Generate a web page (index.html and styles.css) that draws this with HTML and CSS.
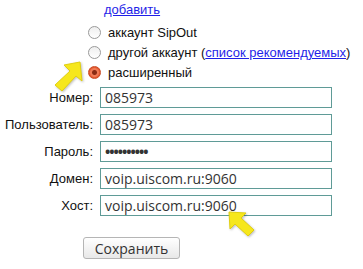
FILE: index.html
```html
<!doctype html>
<html>
  <head>
    <title>SIP account</title>
    <link rel="stylesheet" href="styles.css">
  </head>
  <body>
    <div class="sip">
      <div class="add"><a href="#">добавить</a></div>

      <ul class="choices">
        <li><span class="radio"></span><span>аккаунт SipOut</span></li>
        <li><span class="radio"></span><span>другой аккаунт (<a href="#">список рекомендуемых</a>)</span></li>
        <li><span class="radio checked"></span><span>расширенный</span></li>
      </ul>

      <div class="fields">
        <label>Номер:</label><div class="field">085973</div>
        <label>Пользователь:</label><div class="field">085973</div>
        <label>Пароль:</label><div class="field dots">••••••••••</div>
        <label>Домен:</label><div class="field">voip.uiscom.ru:9060</div>
        <label>Хост:</label><div class="field">voip.uiscom.ru:9060</div>
      </div>

      <div class="actions"><button>Сохранить</button></div>

      <!-- Yellow hint arrows. -->
      <svg class="arrow arrow-radio" width="34" height="36" viewBox="0 0 34 36">
        <polygon points="27,2 29,21 23,16 9,31 2,25 17,11 11,5" fill="#f6e71c" stroke="#e0cf10" stroke-width="1"/>
      </svg>
      <svg class="arrow arrow-host" width="30" height="30" viewBox="0 0 30 30">
        <polygon points="2,2 19,3 14,8 27,20 21,26 8,14 3,19" fill="#f6e71c" stroke="#e0cf10" stroke-width="1"/>
      </svg>
    </div>
  </body>
</html>
```

FILE: styles.css
```css
* { margin: 0; padding: 0; box-sizing: border-box; }
html, body {
  width: 100%;
  height: 100%;
  background: #fff;
  font-family: "Liberation Sans", Arial, sans-serif;
  font-size: 13px;
  color: #111;
}
a { color: #1f1fe8; }
.sip {
  position: relative;
  height: 100%;
}
.add {
  height: 22px;
  padding: 2px 0 0 104px;
}
.choices {
  list-style: none;
  padding-left: 88px;
}
.choices li {
  display: flex;
  align-items: center;
  height: 20px;
  gap: 7px;
  white-space: nowrap;
}
.radio {
  flex: none;
  width: 13px;
  height: 13px;
  border-radius: 50%;
  border: 1px solid #9a9a9a;
  background: linear-gradient(#eee, #fff);
}
.radio.checked {
  border-color: #c84a25;
  background: radial-gradient(circle, #8a2a12 0 2px, #f07a55 3px 4px, #e35a30 5px);
}
.fields {
  display: grid;
  grid-template-columns: 93px 232px;
  column-gap: 7px;
  row-gap: 6px;
  margin-top: 5px;
}
.fields label {
  display: flex;
  align-items: center;
  justify-content: flex-end;
  height: 21px;
}
.field {
  height: 21px;
  border: 1px solid #5f9b97;
  padding: 0 4px;
  font-family: "Open Sans", sans-serif;
  font-size: 14px;
  line-height: 19px;
  color: #333;
}
.field.dots {
  font-size: 14px;
  font-weight: bold;
  letter-spacing: -1px;
}
.actions {
  padding: 21px 0 0 83px;
}
.actions button {
  width: 97px;
  height: 22px;
  border: 1px solid #b5b5b5;
  border-radius: 3px;
  background: linear-gradient(#fff, #e8e8e8);
  font-family: "Open Sans", sans-serif;
  font-size: 14px;
  color: #333;
}
.arrow {
  position: absolute;
  filter: drop-shadow(1px 1px 1px rgba(0, 0, 0, 0.25));
}
.arrow-radio { left: 53px; top: 60px; }
.arrow-host { left: 227px; top: 210px; }
```
